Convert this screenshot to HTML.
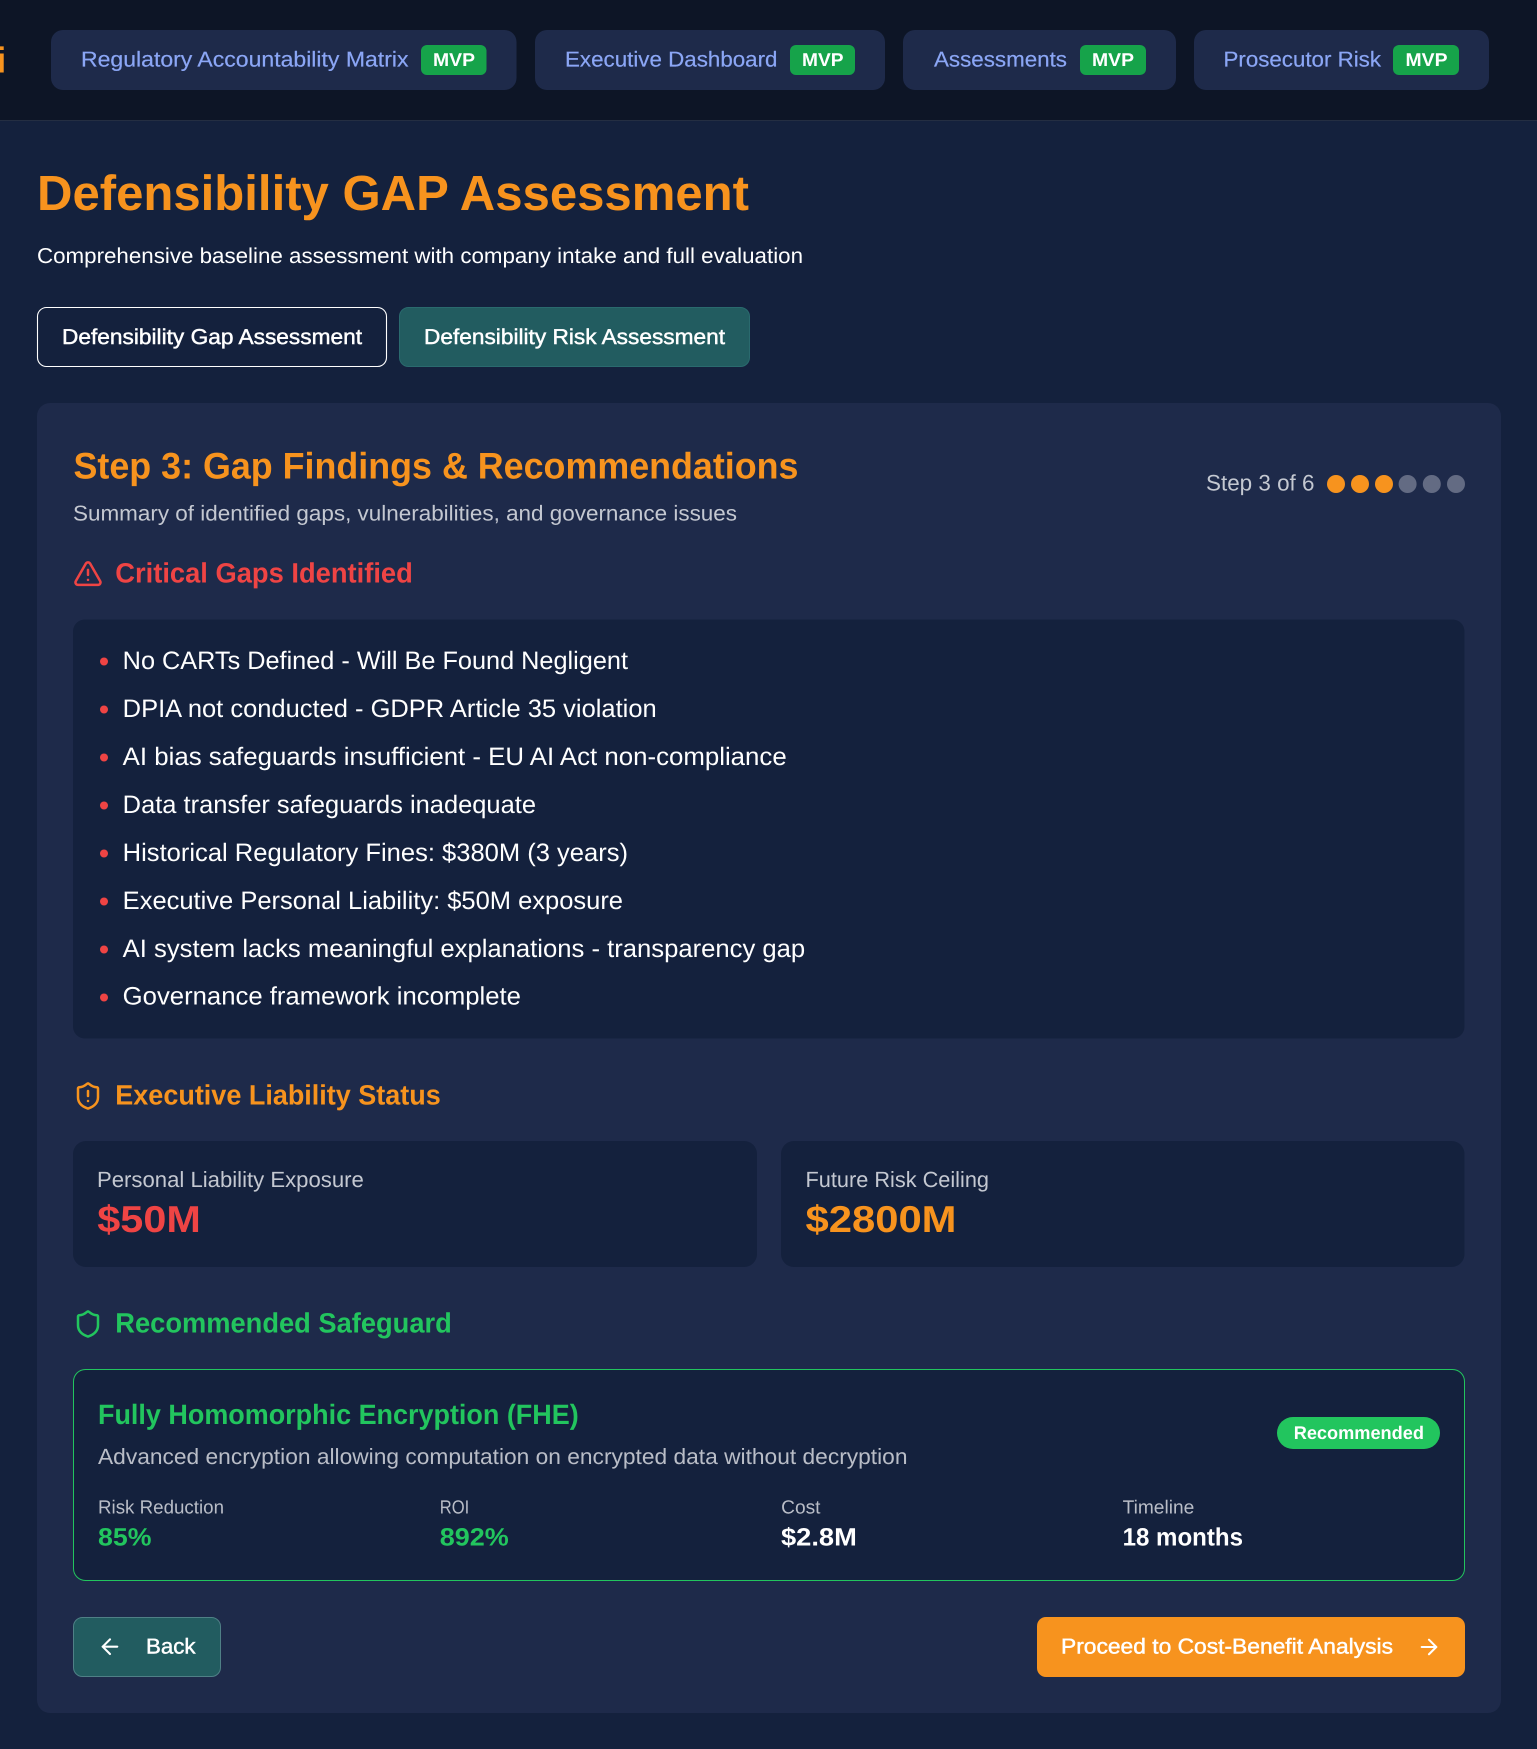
<!DOCTYPE html>
<html lang="en">
<head>
<meta charset="utf-8">
<title>Defensibility GAP Assessment</title>
<style>
html,body{margin:0;padding:0;background:#14213d;width:1537px;height:1749px;overflow:hidden}
svg{display:block}
text{font-family:"Liberation Sans",sans-serif;fill:currentColor;text-rendering:geometricPrecision;white-space:pre}
.b{font-weight:700}
.m{stroke:currentColor;stroke-width:.2px}
.s{stroke:currentColor;stroke-width:.45px}
.o{color:#f7931e}.w{color:#fff}.r{color:#ef4444}.g{color:#22c55e}.n{color:#8ba6f5}.t{color:#c4c8d1}.u{color:#b9bdc7}
.i{fill:none;stroke-width:2;stroke-linecap:round;stroke-linejoin:round}
</style>
</head>
<body>
<svg xmlns="http://www.w3.org/2000/svg" width="1537" height="1749" viewBox="0 0 1537 1749">
<rect width="1537" height="1749" fill="#14213d"/>
<rect width="1537" height="120" fill="#0d1526"/>
<rect y="120" width="1537" height="1" fill="#242e42"/>

<text class="b o" x="-3.8" y="72.7" font-size="36">i</text>

<rect x="51" y="30" width="465.5" height="60" rx="12" fill="#1e2a4a"/>
<text class="n m" x="81" y="66.5" font-size="21.5" textLength="327.5" lengthAdjust="spacingAndGlyphs">Regulatory Accountability Matrix</text>
<rect x="421" y="45" width="65.5" height="30" rx="6" fill="#16a34a"/>
<text class="b w" x="433" y="66" font-size="18.5" textLength="42" lengthAdjust="spacingAndGlyphs">MVP</text>

<rect x="535" y="30" width="350" height="60" rx="12" fill="#1e2a4a"/>
<text class="n m" x="565" y="66.5" font-size="21.5" textLength="212.5" lengthAdjust="spacingAndGlyphs">Executive Dashboard</text>
<rect x="790" y="45" width="65" height="30" rx="6" fill="#16a34a"/>
<text class="b w" x="802" y="66" font-size="18.5" textLength="41.5" lengthAdjust="spacingAndGlyphs">MVP</text>

<rect x="903" y="30" width="273" height="60" rx="12" fill="#1e2a4a"/>
<text class="n m" x="934" y="66.5" font-size="21.5" textLength="133" lengthAdjust="spacingAndGlyphs">Assessments</text>
<rect x="1080" y="45" width="66" height="30" rx="6" fill="#16a34a"/>
<text class="b w" x="1092" y="66" font-size="18.5" textLength="42" lengthAdjust="spacingAndGlyphs">MVP</text>

<rect x="1194" y="30" width="295" height="60" rx="12" fill="#1e2a4a"/>
<text class="n m" x="1223.5" y="66.5" font-size="21.5" textLength="157.5" lengthAdjust="spacingAndGlyphs">Prosecutor Risk</text>
<rect x="1393" y="45" width="66" height="30" rx="6" fill="#16a34a"/>
<text class="b w" x="1405.5" y="66" font-size="18.5" textLength="42" lengthAdjust="spacingAndGlyphs">MVP</text>

<text class="b o" x="37" y="210" font-size="49.5" textLength="712" lengthAdjust="spacingAndGlyphs">Defensibility GAP Assessment</text>
<text class="w" x="37" y="263" font-size="21.5" textLength="766" lengthAdjust="spacingAndGlyphs">Comprehensive baseline assessment with company intake and full evaluation</text>

<rect x="37.5" y="307.5" width="349" height="59" rx="9" fill="none" stroke="#fff" stroke-width="1.1"/>
<text class="w s" x="62" y="344" font-size="21.5" textLength="300" lengthAdjust="spacingAndGlyphs">Defensibility Gap Assessment</text>
<rect x="399.5" y="307.5" width="350" height="59" rx="9" fill="#225c60" stroke="#2a6a6e" stroke-width="1"/>
<text class="w s" x="424" y="344" font-size="21.5" textLength="301" lengthAdjust="spacingAndGlyphs">Defensibility Risk Assessment</text>

<rect x="37" y="403" width="1464" height="1310" rx="13" fill="#1e2a4a"/>

<text class="b o" x="73.5" y="478.3" font-size="37" textLength="725" lengthAdjust="spacingAndGlyphs">Step 3: Gap Findings &amp; Recommendations</text>
<text class="t" x="73" y="520.3" font-size="21.5" textLength="664" lengthAdjust="spacingAndGlyphs">Summary of identified gaps, vulnerabilities, and governance issues</text>

<text class="t" x="1206" y="490.7" font-size="22.5" textLength="108.5" lengthAdjust="spacingAndGlyphs">Step 3 of 6</text>
<circle cx="1336" cy="484" r="9" fill="#f7931e"/>
<circle cx="1360" cy="484" r="9" fill="#f7931e"/>
<circle cx="1384" cy="484" r="9" fill="#f7931e"/>
<circle cx="1407.6" cy="484" r="9" fill="#636b83"/>
<circle cx="1431.8" cy="484" r="9" fill="#636b83"/>
<circle cx="1456" cy="484" r="9" fill="#636b83"/>

<g class="i" stroke="#ef4444" transform="translate(73,558.6) scale(1.25)">
<path d="m21.73 18-8-14a2 2 0 0 0-3.48 0l-8 14A2 2 0 0 0 4 21h16a2 2 0 0 0 1.73-3"/>
<path d="M12 9v4"/><path d="M12 17h.01"/>
</g>
<text class="b r" x="115.3" y="582.7" font-size="28" textLength="297.5" lengthAdjust="spacingAndGlyphs">Critical Gaps Identified</text>

<rect x="73" y="619.5" width="1391.5" height="419" rx="12" fill="#14213d"/>
<circle cx="104" cy="661.5" r="4" fill="#ef4444"/>
<circle cx="104" cy="709.5" r="4" fill="#ef4444"/>
<circle cx="104" cy="757.5" r="4" fill="#ef4444"/>
<circle cx="104" cy="805.5" r="4" fill="#ef4444"/>
<circle cx="104" cy="853.5" r="4" fill="#ef4444"/>
<circle cx="104" cy="901.5" r="4" fill="#ef4444"/>
<circle cx="104" cy="949.5" r="4" fill="#ef4444"/>
<circle cx="104" cy="997.5" r="4" fill="#ef4444"/>
<g class="w">
<text x="122.7" y="668.9" font-size="25.2" textLength="505.3" lengthAdjust="spacingAndGlyphs">No CARTs Defined - Will Be Found Negligent</text>
<text x="122.7" y="716.9" font-size="25.2" textLength="534" lengthAdjust="spacingAndGlyphs">DPIA not conducted - GDPR Article 35 violation</text>
<text x="122.7" y="764.9" font-size="25.2" textLength="664" lengthAdjust="spacingAndGlyphs">AI bias safeguards insufficient - EU AI Act non-compliance</text>
<text x="122.7" y="812.9" font-size="25.2" textLength="413.3" lengthAdjust="spacingAndGlyphs">Data transfer safeguards inadequate</text>
<text x="122.7" y="860.9" font-size="25.2" textLength="505.3" lengthAdjust="spacingAndGlyphs">Historical Regulatory Fines: $380M (3 years)</text>
<text x="122.7" y="908.9" font-size="25.2" textLength="500.3" lengthAdjust="spacingAndGlyphs">Executive Personal Liability: $50M exposure</text>
<text x="122.7" y="956.8" font-size="25.2" textLength="682.5" lengthAdjust="spacingAndGlyphs">AI system lacks meaningful explanations - transparency gap</text>
<text x="122.7" y="1004.7" font-size="25.2" textLength="398.3" lengthAdjust="spacingAndGlyphs">Governance framework incomplete</text>
</g>

<g class="i" stroke="#f7931e" transform="translate(73,1081) scale(1.25)">
<path d="M20 13c0 5-3.5 7.5-7.66 8.95a1 1 0 0 1-.67-.01C7.5 20.5 4 18 4 13V6a1 1 0 0 1 1-1c2 0 4.5-1.2 6.24-2.72a1.17 1.17 0 0 1 1.52 0C14.51 3.81 17 5 19 5a1 1 0 0 1 1 1z"/>
<path d="M12 8v4"/><path d="M12 16h.01"/>
</g>
<text class="b o" x="115.3" y="1104.3" font-size="28" textLength="325.5" lengthAdjust="spacingAndGlyphs">Executive Liability Status</text>

<rect x="73" y="1141" width="684" height="126" rx="13" fill="#14213d"/>
<text class="t" x="97" y="1186.8" font-size="22" textLength="266.8" lengthAdjust="spacingAndGlyphs">Personal Liability Exposure</text>
<text class="b r" x="97.3" y="1232" font-size="37.5" textLength="103.5" lengthAdjust="spacingAndGlyphs">$50M</text>
<rect x="781" y="1141" width="683.5" height="126" rx="13" fill="#14213d"/>
<text class="t" x="805.5" y="1187" font-size="22" textLength="183.5" lengthAdjust="spacingAndGlyphs">Future Risk Ceiling</text>
<text class="b o" x="805.5" y="1232" font-size="37.5" textLength="151" lengthAdjust="spacingAndGlyphs">$2800M</text>

<g class="i" stroke="#22c55e" transform="translate(73,1309) scale(1.25)">
<path d="M20 13c0 5-3.5 7.5-7.66 8.95a1 1 0 0 1-.67-.01C7.5 20.5 4 18 4 13V6a1 1 0 0 1 1-1c2 0 4.5-1.2 6.24-2.72a1.17 1.17 0 0 1 1.52 0C14.51 3.81 17 5 19 5a1 1 0 0 1 1 1z"/>
</g>
<text class="b g" x="115.3" y="1332.7" font-size="28" textLength="336.5" lengthAdjust="spacingAndGlyphs">Recommended Safeguard</text>

<rect x="73.5" y="1369.5" width="1391" height="211" rx="12" fill="#14213d" stroke="#22c55e" stroke-width="1"/>
<text class="b g" x="98" y="1424" font-size="28" textLength="480.7" lengthAdjust="spacingAndGlyphs">Fully Homomorphic Encryption (FHE)</text>
<text class="u" x="98" y="1464" font-size="22" textLength="809.5" lengthAdjust="spacingAndGlyphs">Advanced encryption allowing computation on encrypted data without decryption</text>

<rect x="1277" y="1417" width="163" height="32" rx="16" fill="#22c55e"/>
<text class="b w" x="1293.7" y="1439" font-size="18.3" textLength="130.3" lengthAdjust="spacingAndGlyphs">Recommended</text>

<g class="u">
<text x="98" y="1513.6" font-size="19" textLength="126" lengthAdjust="spacingAndGlyphs">Risk Reduction</text>
<text x="439.8" y="1513.6" font-size="19" textLength="29.5" lengthAdjust="spacingAndGlyphs">ROI</text>
<text x="781.2" y="1513.6" font-size="19" textLength="39.3" lengthAdjust="spacingAndGlyphs">Cost</text>
<text x="1122.6" y="1513.6" font-size="19" textLength="71.7" lengthAdjust="spacingAndGlyphs">Timeline</text>
</g>
<text class="b g" x="98" y="1545.7" font-size="25" textLength="53.5" lengthAdjust="spacingAndGlyphs">85%</text>
<text class="b g" x="439.8" y="1545.7" font-size="25" textLength="69" lengthAdjust="spacingAndGlyphs">892%</text>
<text class="b w" x="781" y="1545.7" font-size="25" textLength="75.8" lengthAdjust="spacingAndGlyphs">$2.8M</text>
<text class="b w" x="1122.6" y="1545.7" font-size="25" textLength="120.4" lengthAdjust="spacingAndGlyphs">18 months</text>

<rect x="73.5" y="1617.5" width="147" height="59" rx="9" fill="#225c60" stroke="#4f8086" stroke-width="1"/>
<g class="i" stroke="#fff" stroke-width="1.9" transform="translate(97.5,1634.2) scale(1.04)">
<path d="m12 19-7-7 7-7"/><path d="M19 12H5"/>
</g>
<text class="w s" x="146" y="1653.3" font-size="21.5" textLength="49.5" lengthAdjust="spacingAndGlyphs">Back</text>

<rect x="1037" y="1617" width="428" height="60" rx="9" fill="#f7931e"/>
<text class="w s" x="1061" y="1653.3" font-size="21.5" textLength="332" lengthAdjust="spacingAndGlyphs">Proceed to Cost-Benefit Analysis</text>
<g class="i" stroke="#fff" transform="translate(1416.5,1634.5) scale(1.04)">
<path d="M5 12h14"/><path d="m12 5 7 7-7 7"/>
</g>
</svg>
</body>
</html>
